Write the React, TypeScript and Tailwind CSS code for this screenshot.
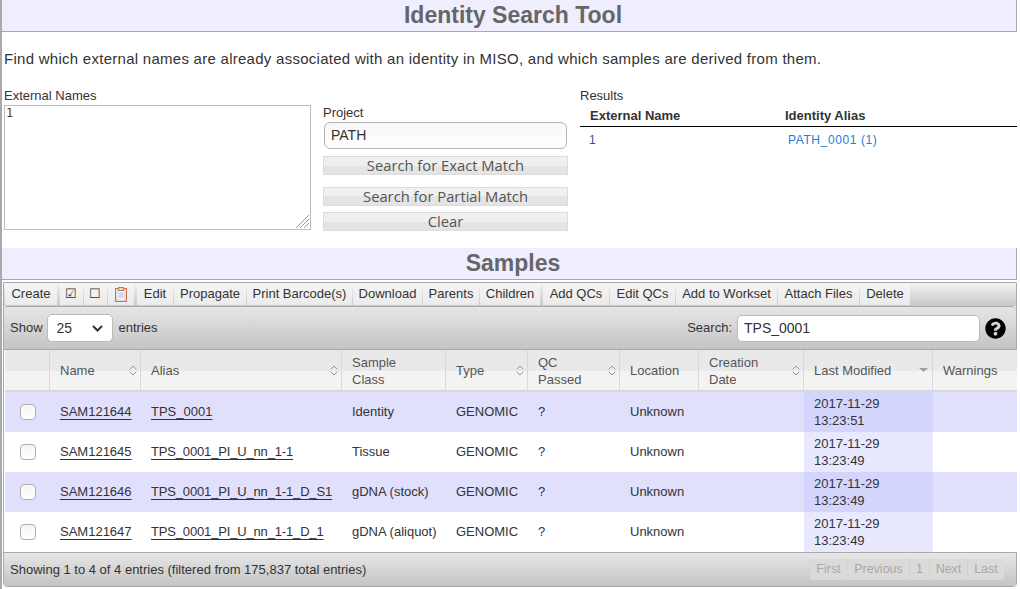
import React from "react";
import { FaQuestionCircle } from "react-icons/fa";

const sans = "font-['Liberation_Sans',Arial,sans-serif]";

function SortIcon() {
  return (
    <svg width="8" height="11" viewBox="0 0 8 11" fill="none" stroke="#969696" strokeWidth="1" className="shrink-0">
      <path d="M.7 4.3 4 1l3.3 3.3M.7 6.7 4 10l3.3-3.3" />
    </svg>
  );
}

function SortDesc() {
  return (
    <svg width="9" height="4" viewBox="0 0 9 4" className="shrink-0">
      <path d="M0 0h9L4.5 4z" fill="#a0a0a0" />
    </svg>
  );
}

function Clipboard() {
  return (
    <svg width="12" height="15" viewBox="0 0 12 15">
      <rect x="0.5" y="1.5" width="11" height="13" fill="#f5e4d4" stroke="#d9694f" />
      <rect x="2" y="3.5" width="8" height="9.5" fill="#faf8fd" stroke="#d5d2ea" />
      <rect x="3.5" y="0.5" width="5" height="3" fill="#ecdfa8" stroke="#8f8f70" />
      <path d="M3.5 6h5M3.5 8h5M3.5 10h5" stroke="#b5b2d2" />
    </svg>
  );
}

function ResizeHatch() {
  return (
    <svg width="15" height="15" viewBox="0 0 15 15" stroke="#9a9a9a" strokeWidth="1" className="absolute right-[1px] bottom-[1px]">
      <path d="M14 1 1 14M14 5 5 14M14 9 9 14" />
    </svg>
  );
}

function SectionTitle({ children, className }: { children: React.ReactNode; className: string }) {
  return (
    <h1 className={`flex items-center justify-center pl-[8px] bg-[#eeeeff] border-b border-r border-[#a9a9a9] text-[23px] font-bold text-[#666666] ${className}`}>
      {children}
    </h1>
  );
}

function GreyButton({ label, className }: { label: string; className: string }) {
  return (
    <button className={`w-[245px] h-[19px] flex items-center justify-center border border-[#dcdcdc] bg-[linear-gradient(#f0f0f0_50%,#e4e4e4_50%)] font-['Open_Sans',sans-serif] text-[14.75px] text-[#555555] ${className}`}>
      {label}
    </button>
  );
}

const toolbar: { label: React.ReactNode; w: number; gap?: number; pad?: boolean }[] = [
  { label: "Create", w: 52, gap: 3 },
  { label: "☑", w: 23, gap: 1, pad: true },
  { label: "☐", w: 23, gap: 1, pad: true },
  { label: <Clipboard />, w: 26, gap: 3 },
  { label: "Edit", w: 36, gap: 1 },
  { label: "Propagate", w: 72, gap: 1 },
  { label: "Print Barcode(s)", w: 105, gap: 1 },
  { label: "Download", w: 69, gap: 1 },
  { label: "Parents", w: 56, gap: 1 },
  { label: "Children", w: 60, gap: 3 },
  { label: "Add QCs", w: 66, gap: 1 },
  { label: "Edit QCs", w: 65, gap: 1 },
  { label: "Add to Workset", w: 101, gap: 1 },
  { label: "Attach Files", w: 81, gap: 1 },
  { label: "Delete", w: 50 },
];

const columns: { label: React.ReactNode; w: number; icon?: "sort" | "desc"; multi?: boolean }[] = [
  { label: "", w: 45 },
  { label: "Name", w: 91, icon: "sort" },
  { label: "Alias", w: 201, icon: "sort" },
  { label: <>Sample<br />Class</>, w: 104, multi: true },
  { label: "Type", w: 82, icon: "sort" },
  { label: <>QC<br />Passed</>, w: 92, icon: "sort", multi: true },
  { label: "Location", w: 79 },
  { label: <>Creation<br />Date</>, w: 105, icon: "sort", multi: true },
  { label: "Last Modified", w: 129, icon: "desc" },
  { label: "Warnings", w: 84 },
];

const rows = [
  ["SAM121644", "TPS_0001", "Identity", "GENOMIC", "?", "Unknown", "13:23:51"],
  ["SAM121645", "TPS_0001_PI_U_nn_1-1", "Tissue", "GENOMIC", "?", "Unknown", "13:23:49"],
  ["SAM121646", "TPS_0001_PI_U_nn_1-1_D_S1", "gDNA (stock)", "GENOMIC", "?", "Unknown", "13:23:49"],
  ["SAM121647", "TPS_0001_PI_U_nn_1-1_D_1", "gDNA (aliquot)", "GENOMIC", "?", "Unknown", "13:23:49"],
];

const pages = [
  { label: "First", w: 37 },
  { label: "Previous", w: 62 },
  { label: "1", w: 20 },
  { label: "Next", w: 38 },
  { label: "Last", w: 37 },
];

export default function App() {
  return (
    <div className={`${sans} w-[1020px] h-[589px] overflow-hidden bg-white text-[#333333] pr-[3px]`}>
      <div className="h-full border-l-2 border-[#a9a9a9]">
        <SectionTitle className="h-[32px]">Identity Search Tool</SectionTitle>

        <p className="mt-[18px] ml-[2px] text-[15px] tracking-[0.27px] leading-[18px] text-[#333333]">
          Find which external names are already associated with an identity in MISO, and which samples are derived from them.
        </p>

        <div className="flex mt-[20px] h-[151px]">
          <div className="w-[321px] pl-[2px] shrink-0">
            <div className="text-[13px] leading-[14px] mt-[1px]">External Names</div>
            <div className="relative mt-[2px] w-[307px] h-[125px]">
              <textarea
                defaultValue="1"
                className="block w-full h-full resize-none border border-[#bdbdbd] px-[1px] font-['DejaVu_Sans_Mono',monospace] text-[12px] leading-[15px] text-[#5a3a2a] outline-none"
              />
              <ResizeHatch />
            </div>
          </div>

          <div className="w-[257px] shrink-0 flex flex-col">
            <div className="text-[13px] leading-[14px] mt-[18px]">Project</div>
            <div className="mt-[2px] ml-[1px] w-[243px] h-[27px] flex items-center px-[6px] border border-[#b5b5b5] rounded-[6px] bg-[linear-gradient(#f7f7f7,#ffffff)] text-[14px] text-[#333333]">
              PATH
            </div>
            <GreyButton label="Search for Exact Match" className="mt-[7px]" />
            <GreyButton label="Search for Partial Match" className="mt-[12px]" />
            <GreyButton label="Clear" className="mt-[6px]" />
          </div>

          <div className="flex-1 min-w-0">
            <div className="text-[13px] leading-[14px] mt-[1px]">Results</div>
            <div className="flex h-[18px] items-center mt-[4px] text-[13px] font-bold">
              <div className="w-[205px] pl-[10px]">External Name</div>
              <div>Identity Alias</div>
            </div>
            <div className="h-[1px] mt-[1px] bg-black" />
            <div className="flex items-center mt-[4px] h-[17px] text-[12px] tracking-[0.6px]">
              <div className="w-[208px] pl-[9px] text-[#1a5a8a]">1</div>
              <a className="text-[#1a80d8]">PATH_0001 (1)</a>
            </div>
          </div>
        </div>

        <SectionTitle className="h-[32px] mt-[9px]">Samples</SectionTitle>

        <div className="mt-[2px] ml-[1px] w-[1014px] border border-[#a9a9a9] rounded-b-[4px]">
          <div className="h-[23px] flex items-start pl-[1px] bg-[linear-gradient(#f2f2f2,#c8c8c8)]">
            {toolbar.map((b, i) => (
              <button
                key={i}
                style={{ width: b.w, marginRight: b.gap ?? 0 }}
                className={`h-[22px] shrink-0 flex items-center justify-center bg-[linear-gradient(#f5f5f5,#ebebeb)] text-[13px] text-[#333333] ${b.pad ? "pr-[2px]" : ""}`}
              >
                {b.label}
              </button>
            ))}
          </div>

          <div className="h-[44px] flex items-center justify-between border-t border-b border-[#a9a9a9] bg-[linear-gradient(#e6e6e6,#c4c4c4)] rounded-t-[4px]">
            <div className="flex items-center pl-[6px] text-[13px]">
              <span>Show</span>
              <div className="ml-[4px] w-[66px] h-[28px] flex items-center justify-between pl-[9px] pr-[9px] rounded-[5px] border border-[#bbbbbb] bg-white text-[14px]">
                <span>25</span>
                <svg width="11" height="7" viewBox="0 0 11 7" fill="none" stroke="#333" strokeWidth="2">
                  <path d="M1 1l4.5 4.5L10 1" />
                </svg>
              </div>
              <span className="ml-[6px]">entries</span>
            </div>
            <div className="flex items-center pr-[10px] text-[13px]">
              <span>Search:</span>
              <div className="ml-[5px] w-[243px] h-[27px] flex items-center px-[6px] rounded-[5px] border border-[#bbbbbb] bg-white text-[14px]">
                TPS_0001
              </div>
              <FaQuestionCircle className="ml-[5px] text-black" size={21} />
            </div>
          </div>

          <table className="w-[1012px] table-fixed border-separate border-spacing-0 text-[13px] ml-[1px]">
            <colgroup>
              {columns.map((c, i) => (
                <col key={i} style={{ width: c.w }} />
              ))}
            </colgroup>
            <thead>
              <tr className="bg-[linear-gradient(#e9e9e9_50%,#f3f3f3_50%)]">
                {columns.map((c, i) => (
                  <th key={i} className={`h-[42px] p-0 font-normal text-left text-[#555555] leading-[17px] border-b-2 border-[#d8d8d8] ${i < columns.length - 1 ? "border-r" : ""}`}>
                    <div className={`flex items-center justify-between pl-[10px] ${c.icon === "desc" ? "pr-[4px]" : "pr-[3px]"}`}>
                      <span className={c.multi ? "relative top-[1px]" : ""}>{c.label}</span>
                      {c.icon === "sort" && <SortIcon />}
                      {c.icon === "desc" && <SortDesc />}
                    </div>
                  </th>
                ))}
              </tr>
            </thead>
            <tbody>
              {rows.map((r, i) => {
                const odd = i % 2 === 0;
                return (
                  <tr key={r[0]} className={odd ? "bg-[#e0e0fd]" : "bg-white"}>
                    <td className="h-[40px] p-0 pl-[15px]">
                      <input type="checkbox" className="block appearance-none w-[16px] h-[16px] rounded-[4px] border border-[#b0b0b0] bg-[linear-gradient(#f4f4f4,#ffffff)] -mt-[1px]" />
                    </td>
                    <td className="p-0 pl-[10px]"><a className="underline underline-offset-[3px]">{r[0]}</a></td>
                    <td className="p-0 pl-[10px]"><a className={`underline underline-offset-[3px] ${i > 0 ? "tracking-[-0.16px]" : ""}`}>{r[1]}</a></td>
                    <td className="p-0 pl-[10px]">{r[2]}</td>
                    <td className="p-0 pl-[10px]">{r[3]}</td>
                    <td className="p-0 pl-[10px]">{r[4]}</td>
                    <td className="p-0 pl-[10px]">{r[5]}</td>
                    <td className="p-0" />
                    <td className={`p-0 pl-[10px] leading-[17px] ${odd ? "bg-[#d3d5fd]" : "bg-[#e8e8fe]"}`}>
                      2017-11-29<br />{r[6]}
                    </td>
                    <td className="p-0" />
                  </tr>
                );
              })}
            </tbody>
          </table>

          <div className="h-[34px] flex items-center justify-between border-t border-[#a9a9a9] rounded-b-[4px] bg-[linear-gradient(#e6e6e6,#c4c4c4)] text-[13px] pl-[6px] pr-[12px]">
            <span>Showing 1 to 4 of 4 entries (filtered from 175,837 total entries)</span>
            <div className="flex h-[21px] items-center rounded-[3px] bg-[#dadada] text-[#a8a8a8] text-[12.5px]">
              {pages.map((p, i) => (
                <span key={p.label} style={{ width: p.w }} className={`h-full flex items-center justify-center ${i > 0 ? "border-l border-[#d2d2d2]" : ""}`}>{p.label}</span>
              ))}
            </div>
          </div>
        </div>
      </div>
    </div>
  );
}
